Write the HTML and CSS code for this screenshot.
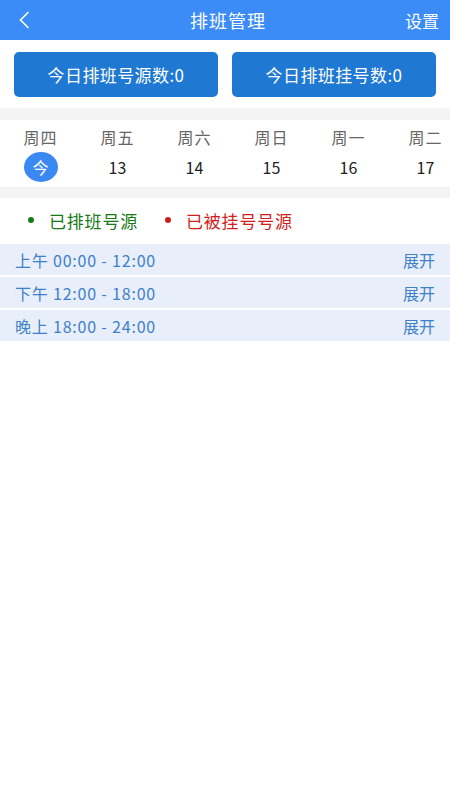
FILE: index.html
```html
<!DOCTYPE html>
<html lang="zh-CN">
<head>
  <meta charset="UTF-8" />
  <meta name="viewport" content="width=device-width, initial-scale=1.0" />
  <title>排班管理</title>
  <link rel="stylesheet" href="styles.css">
</head>
<body>
  <div class="header">
    <span class="back">
      <svg width="14" height="18" viewBox="0 0 14 18">
        <path d="M11.5 1 L3.5 9 L11.5 17" fill="none" stroke="#fff" stroke-width="1.6" />
      </svg>
    </span>
    <span class="title">排班管理</span>
    <span class="setting">设置</span>
  </div>

  <div class="stats">
    <div class="stat-btn">今日排班号源数:0</div>
    <div class="stat-btn">今日排班挂号数:0</div>
  </div>

  <div class="divider"></div>

  <div class="week">
    <div class="day">
      <div class="day-name">周四</div>
      <div class="day-num today">今</div>
    </div>
    <div class="day">
      <div class="day-name">周五</div>
      <div class="day-num">13</div>
    </div>
    <div class="day">
      <div class="day-name">周六</div>
      <div class="day-num">14</div>
    </div>
    <div class="day">
      <div class="day-name">周日</div>
      <div class="day-num">15</div>
    </div>
    <div class="day">
      <div class="day-name">周一</div>
      <div class="day-num">16</div>
    </div>
    <div class="day">
      <div class="day-name">周二</div>
      <div class="day-num">17</div>
    </div>
  </div>

  <div class="divider thin"></div>

  <div class="legend">
    <span class="legend-item green"><i class="dot"></i>已排班号源</span>
    <span class="legend-item red"><i class="dot"></i>已被挂号号源</span>
  </div>

  <div class="periods">
    <div class="period">
      <span class="time">上午 00:00 - 12:00</span>
      <span>展开</span>
    </div>
    <div class="period">
      <span class="time">下午 12:00 - 18:00</span>
      <span>展开</span>
    </div>
    <div class="period">
      <span class="time">晚上 18:00 - 24:00</span>
      <span>展开</span>
    </div>
  </div>
</body>
</html>
```

FILE: styles.css
```css
body {
  margin: 0;
  background: #fff;
  font-family: "Noto Sans CJK SC", "Noto Sans", sans-serif;
  overflow: hidden;
}

.header {
  height: 40px;
  background: #3b8cf6;
  color: #fff;
  display: flex;
  align-items: center;
  justify-content: space-between;
  padding: 0 11px 0 17px;
}

.back {
  width: 40px;
  display: flex;
  align-items: center;
}

.title {
  font-size: 18px;
  letter-spacing: 1px;
}

.setting {
  width: 40px;
  text-align: right;
  font-size: 17px;
}

.stats {
  display: flex;
  gap: 14px;
  padding: 12px 14px 11px;
}

.stat-btn {
  flex: 1;
  height: 45px;
  border-radius: 5px;
  background: #1f78d1;
  color: #fff;
  font-size: 17px;
  letter-spacing: 0.4px;
  display: flex;
  align-items: center;
  justify-content: center;
}

.divider {
  height: 12px;
  background: #f4f4f4;
}

.divider.thin {
  height: 11px;
}

.week {
  display: flex;
  overflow: hidden;
  padding: 5px 0 5px 2px;
}

.day {
  flex: 0 0 77px;
  display: flex;
  flex-direction: column;
  align-items: center;
}

.day-name {
  font-size: 16px;
  line-height: 24px;
  letter-spacing: 1px;
  color: #666;
}

.day-num {
  margin-top: 3px;
  height: 30px;
  line-height: 30px;
  font-size: 16px;
  color: #222;
}

.day-num.today {
  width: 34px;
  border-radius: 50%;
  background: #3a88f1;
  color: #fff;
  text-align: center;
}

.legend {
  height: 44px;
  padding-bottom: 2px;
  display: flex;
  align-items: center;
  padding-left: 28px;
  gap: 27px;
  font-size: 17px;
  letter-spacing: 0.8px;
}

.legend-item {
  display: flex;
  align-items: center;
}

.dot {
  width: 6px;
  height: 6px;
  border-radius: 50%;
  margin-right: 15px;
}

.green {
  color: #177a17;
}

.green .dot {
  background: #177a17;
}

.red {
  color: #d21d1d;
}

.red .dot {
  background: #d21d1d;
}

.periods {
  display: flex;
  flex-direction: column;
  gap: 2px;
}

.period {
  height: 31px;
  background: #e8effb;
  display: flex;
  align-items: center;
  justify-content: space-between;
  padding: 0 15px;
  font-size: 16px;
  color: #3f80c9;
}

.time {
  letter-spacing: 0.8px;
}
```
